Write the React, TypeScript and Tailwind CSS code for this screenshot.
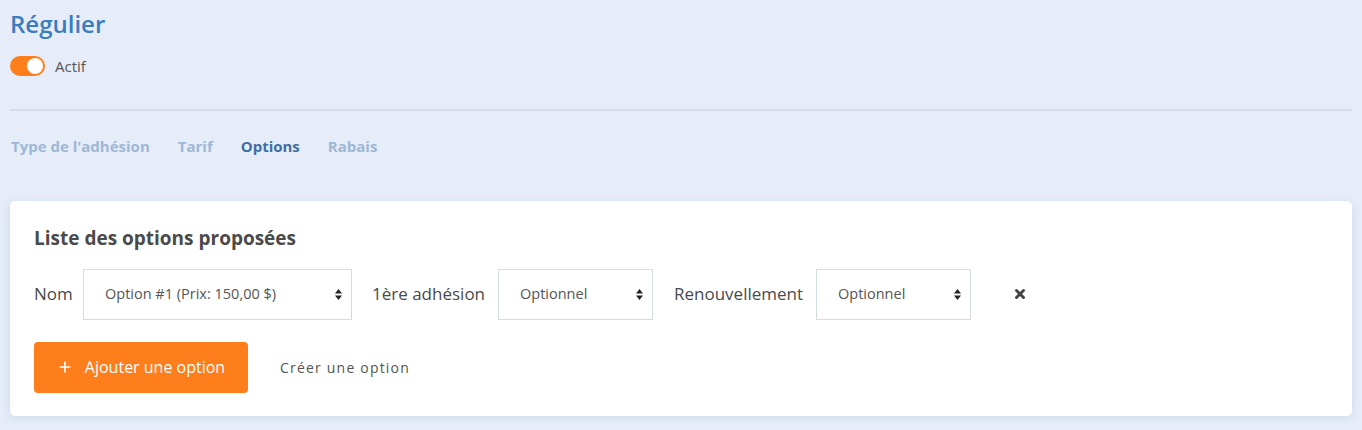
import { Plus, X } from 'lucide-react';

const TABS = [
  { label: "Type de l'adhésion", active: false },
  { label: 'Tarif', active: false },
  { label: 'Options', active: true },
  { label: 'Rabais', active: false },
] as const;

function SortArrows() {
  return (
    <svg width="7" height="11" viewBox="0 0 7 11" className="shrink-0">
      <path d="M3.5 0 L7 4.5 L0 4.5 Z" fill="#222" />
      <path d="M3.5 11 L7 6.5 L0 6.5 Z" fill="#222" />
    </svg>
  );
}

function FakeSelect({ value, width }: { value: string; width: string }) {
  return (
    <div
      className={`flex items-center justify-between h-[51px] border border-[#d4dbe3] bg-white pl-[21px] pr-[9px] text-[14.5px] text-[#555] ${width}`}
    >
      <span>{value}</span>
      <SortArrows />
    </div>
  );
}

export default function App() {
  return (
    <div className="min-h-[430px] w-full bg-[#e6edf8] px-[10px] pt-[6px] pb-[14px] font-['Open_Sans',sans-serif]">
      {/* Header */}
      <h1 className="text-[24px] font-semibold leading-[36px] text-[#3b7cbf]">Régulier</h1>
      <div className="mt-[13px] flex items-center gap-[10px]">
        <div className="relative h-[20px] w-[35px] rounded-full bg-[#fd7e1a]">
          <span className="absolute right-[2px] top-[2px] h-[16px] w-[16px] rounded-full bg-white" />
        </div>
        <span className="text-[15px] text-[#555]">Actif</span>
      </div>

      <div className="mt-[31px] h-[2px] bg-[#d6dde9]" />

      {/* Tabs */}
      <nav className="mt-[25px] flex items-center gap-[28px] pl-[1px]">
        {TABS.map((tab) => (
          <span
            key={tab.label}
            className={`text-[15px] font-bold leading-[20px] ${tab.active ? 'text-[#3f6ea3]' : 'text-[#9db7d7]'}`}
          >
            {tab.label}
          </span>
        ))}
      </nav>

      {/* Options card */}
      <div className="mt-[45px] rounded-[5px] bg-white px-[24px] pt-[25px] pb-[23px] shadow-[0_2px_8px_rgba(140,160,200,0.25)]">
        <h2 className="text-[19px] font-bold leading-[24px] text-[#4a4a4a]">Liste des options proposées</h2>

        <div className="mt-[19px] flex items-center">
          <span className="w-[49px] text-[17px] text-[#4a4a4a]">Nom</span>
          <FakeSelect value="Option #1 (Prix: 150,00 $)" width="w-[269px]" />
          <span className="ml-[20px] w-[126px] whitespace-nowrap text-[17px] text-[#4a4a4a]">1ère adhésion</span>
          <FakeSelect value="Optionnel" width="w-[155px]" />
          <span className="ml-[21px] w-[142px] whitespace-nowrap text-[17px] text-[#4a4a4a]">Renouvellement</span>
          <FakeSelect value="Optionnel" width="w-[155px]" />
          <X size={14} strokeWidth={5} className="ml-[42px] text-[#444]" />
        </div>

        <div className="mt-[22px] flex items-center">
          <button className="flex h-[51px] w-[214px] items-center justify-center gap-[12px] rounded-[4px] bg-[#fd7e1a] text-[16px] text-white">
            <Plus size={16} strokeWidth={2.5} />
            <span>Ajouter une option</span>
          </button>
          <span className="ml-[32px] text-[14px] tracking-[1.2px] text-[#555]">
            Créer une option
          </span>
        </div>
      </div>
    </div>
  );
}
